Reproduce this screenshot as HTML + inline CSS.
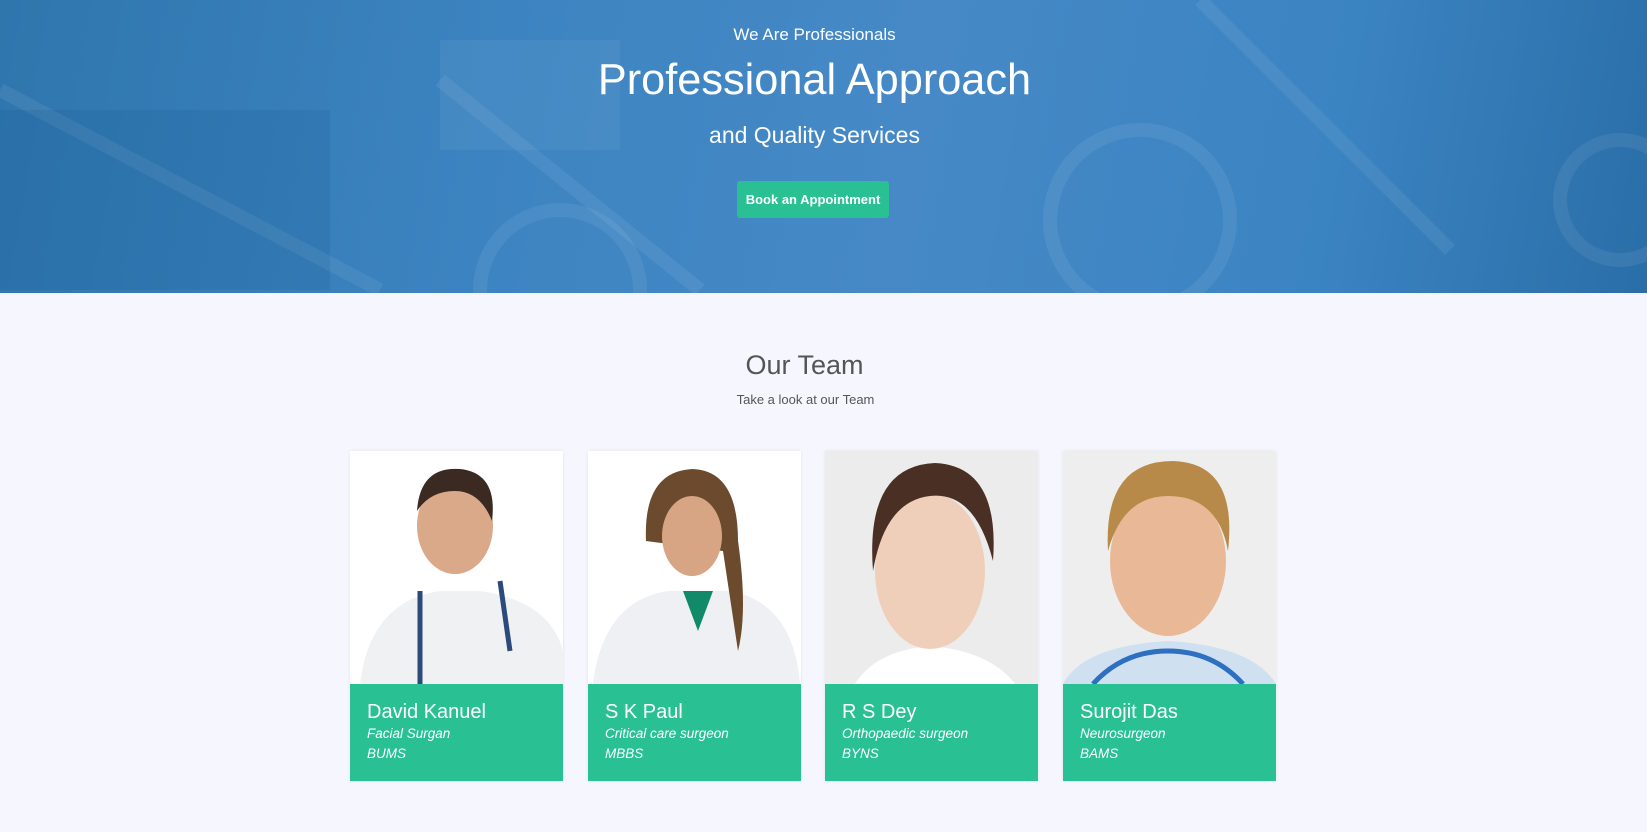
<!DOCTYPE html>
<html><head><meta charset="utf-8"><style>
*{margin:0;padding:0;box-sizing:border-box}
body{width:1647px;height:832px;background:#f6f7fe;font-family:"Liberation Sans",Arial,sans-serif;overflow:hidden;position:relative}
.hero{position:absolute;left:0;top:0;width:1647px;height:293px;background:linear-gradient(100deg,#2f76ad 0%,#3c84c1 30%,#4689c6 55%,#3b84c2 80%,#2a6ea8 100%);overflow:hidden}
.hero .t{position:absolute;left:-9px;width:100%;text-align:center;color:#fff}
.btn{position:absolute;left:737px;top:181px;width:152px;height:37px;background:#29c094;border-radius:3px;color:#fff;font-size:13px;font-weight:bold;text-align:center;line-height:37px}
h2{position:absolute;top:350px;left:-19px;width:100%;text-align:center;font-size:27px;font-weight:normal;color:#555}
.sub{position:absolute;top:392px;left:-18px;width:100%;text-align:center;font-size:13px;color:#555}
.card{position:absolute;top:451px;width:213px;height:330px;background:#fff;box-shadow:0 0 4px rgba(0,0,0,.08)}
.ph{height:233px;overflow:hidden}
.info{height:97px;background:#29c094;color:#fff;padding:16px 17px}
.info .n{font-size:20px;line-height:24px}
.info .r{font-size:13.5px;font-style:italic;line-height:20px}
</style></head><body>
<div class="hero">
<svg width="1647" height="293" style="position:absolute;left:0;top:0" fill="none" stroke="rgba(255,255,255,0.07)" stroke-width="14">
<path d="M0 90 L380 290" /><path d="M440 80 L700 290"/><path d="M1200 0 L1450 250"/>
<circle cx="1140" cy="220" r="90"/><circle cx="560" cy="290" r="80"/><circle cx="1620" cy="200" r="60"/>
<rect x="440" y="40" width="180" height="110" fill="rgba(255,255,255,0.05)" stroke="none"/>
<rect x="0" y="110" width="330" height="180" fill="rgba(0,60,120,0.1)" stroke="none"/>
</svg>
<div class="t" style="top:25px;font-size:17px">We Are Professionals</div>
<div class="t" style="top:56px;font-size:43.3px">Professional Approach</div>
<div class="t" style="top:122px;font-size:23px">and Quality Services</div>
<div class="btn">Book an Appointment</div>
</div>
<h2>Our Team</h2>
<div class="sub">Take a look at our Team</div>

<div class="card" style="left:350px"><div class="ph" style="background:#fff"><svg width="213" height="233"><path d="M10 233 Q20 150 90 140 L130 140 Q200 150 213 200 L213 233Z" fill="#f0f1f3"/><ellipse cx="105" cy="75" rx="38" ry="48" fill="#d9a98a"/><path d="M67 60 Q70 15 110 18 Q148 22 142 70 Q130 40 105 40 Q80 40 67 60Z" fill="#3a2a22"/><path d="M70 140 L70 233 M150 130 L160 200" stroke="#2c4a7a" stroke-width="5" fill="none"/></svg></div><div class="info"><div class="n">David Kanuel</div><div class="r">Facial Surgan</div><div class="r">BUMS</div></div></div>

<div class="card" style="left:588px"><div class="ph" style="background:#fff"><svg width="212" height="233"><path d="M5 233 Q15 150 80 140 L140 140 Q205 150 212 233Z" fill="#eef0f3"/><path d="M95 140 L110 180 L125 140Z" fill="#118a6a"/><path d="M58 90 Q55 20 105 18 Q150 20 150 90 Q160 160 150 200 L135 100 Z" fill="#6b4a2e"/><ellipse cx="104" cy="85" rx="30" ry="40" fill="#d7a584"/></svg></div><div class="info"><div class="n">S K Paul</div><div class="r">Critical care surgeon</div><div class="r">MBBS</div></div></div>

<div class="card" style="left:825px"><div class="ph" style="background:#ececec"><svg width="213" height="233"><path d="M30 233 Q50 200 105 195 Q165 200 190 233Z" fill="#fff"/><ellipse cx="105" cy="120" rx="55" ry="78" fill="#efcfba"/><path d="M48 120 Q40 15 110 12 Q175 15 168 110 Q150 40 105 45 Q60 50 48 120Z" fill="#4a3024"/></svg></div><div class="info"><div class="n">R S Dey</div><div class="r">Orthopaedic surgeon</div><div class="r">BYNS</div></div></div>

<div class="card" style="left:1063px"><div class="ph" style="background:#eeeeee"><svg width="213" height="233"><path d="M0 233 Q20 195 105 190 Q190 195 213 233Z" fill="#cfe0f0"/><path d="M30 233 Q60 200 105 200 Q150 200 180 233" stroke="#2d6fc0" stroke-width="5" fill="none"/><ellipse cx="105" cy="110" rx="58" ry="75" fill="#e9b896"/><path d="M45 100 Q40 10 110 10 Q175 12 165 100 Q155 45 105 45 Q60 45 45 100Z" fill="#b88a4a"/></svg></div><div class="info"><div class="n">Surojit Das</div><div class="r">Neurosurgeon</div><div class="r">BAMS</div></div></div>
</body></html>
